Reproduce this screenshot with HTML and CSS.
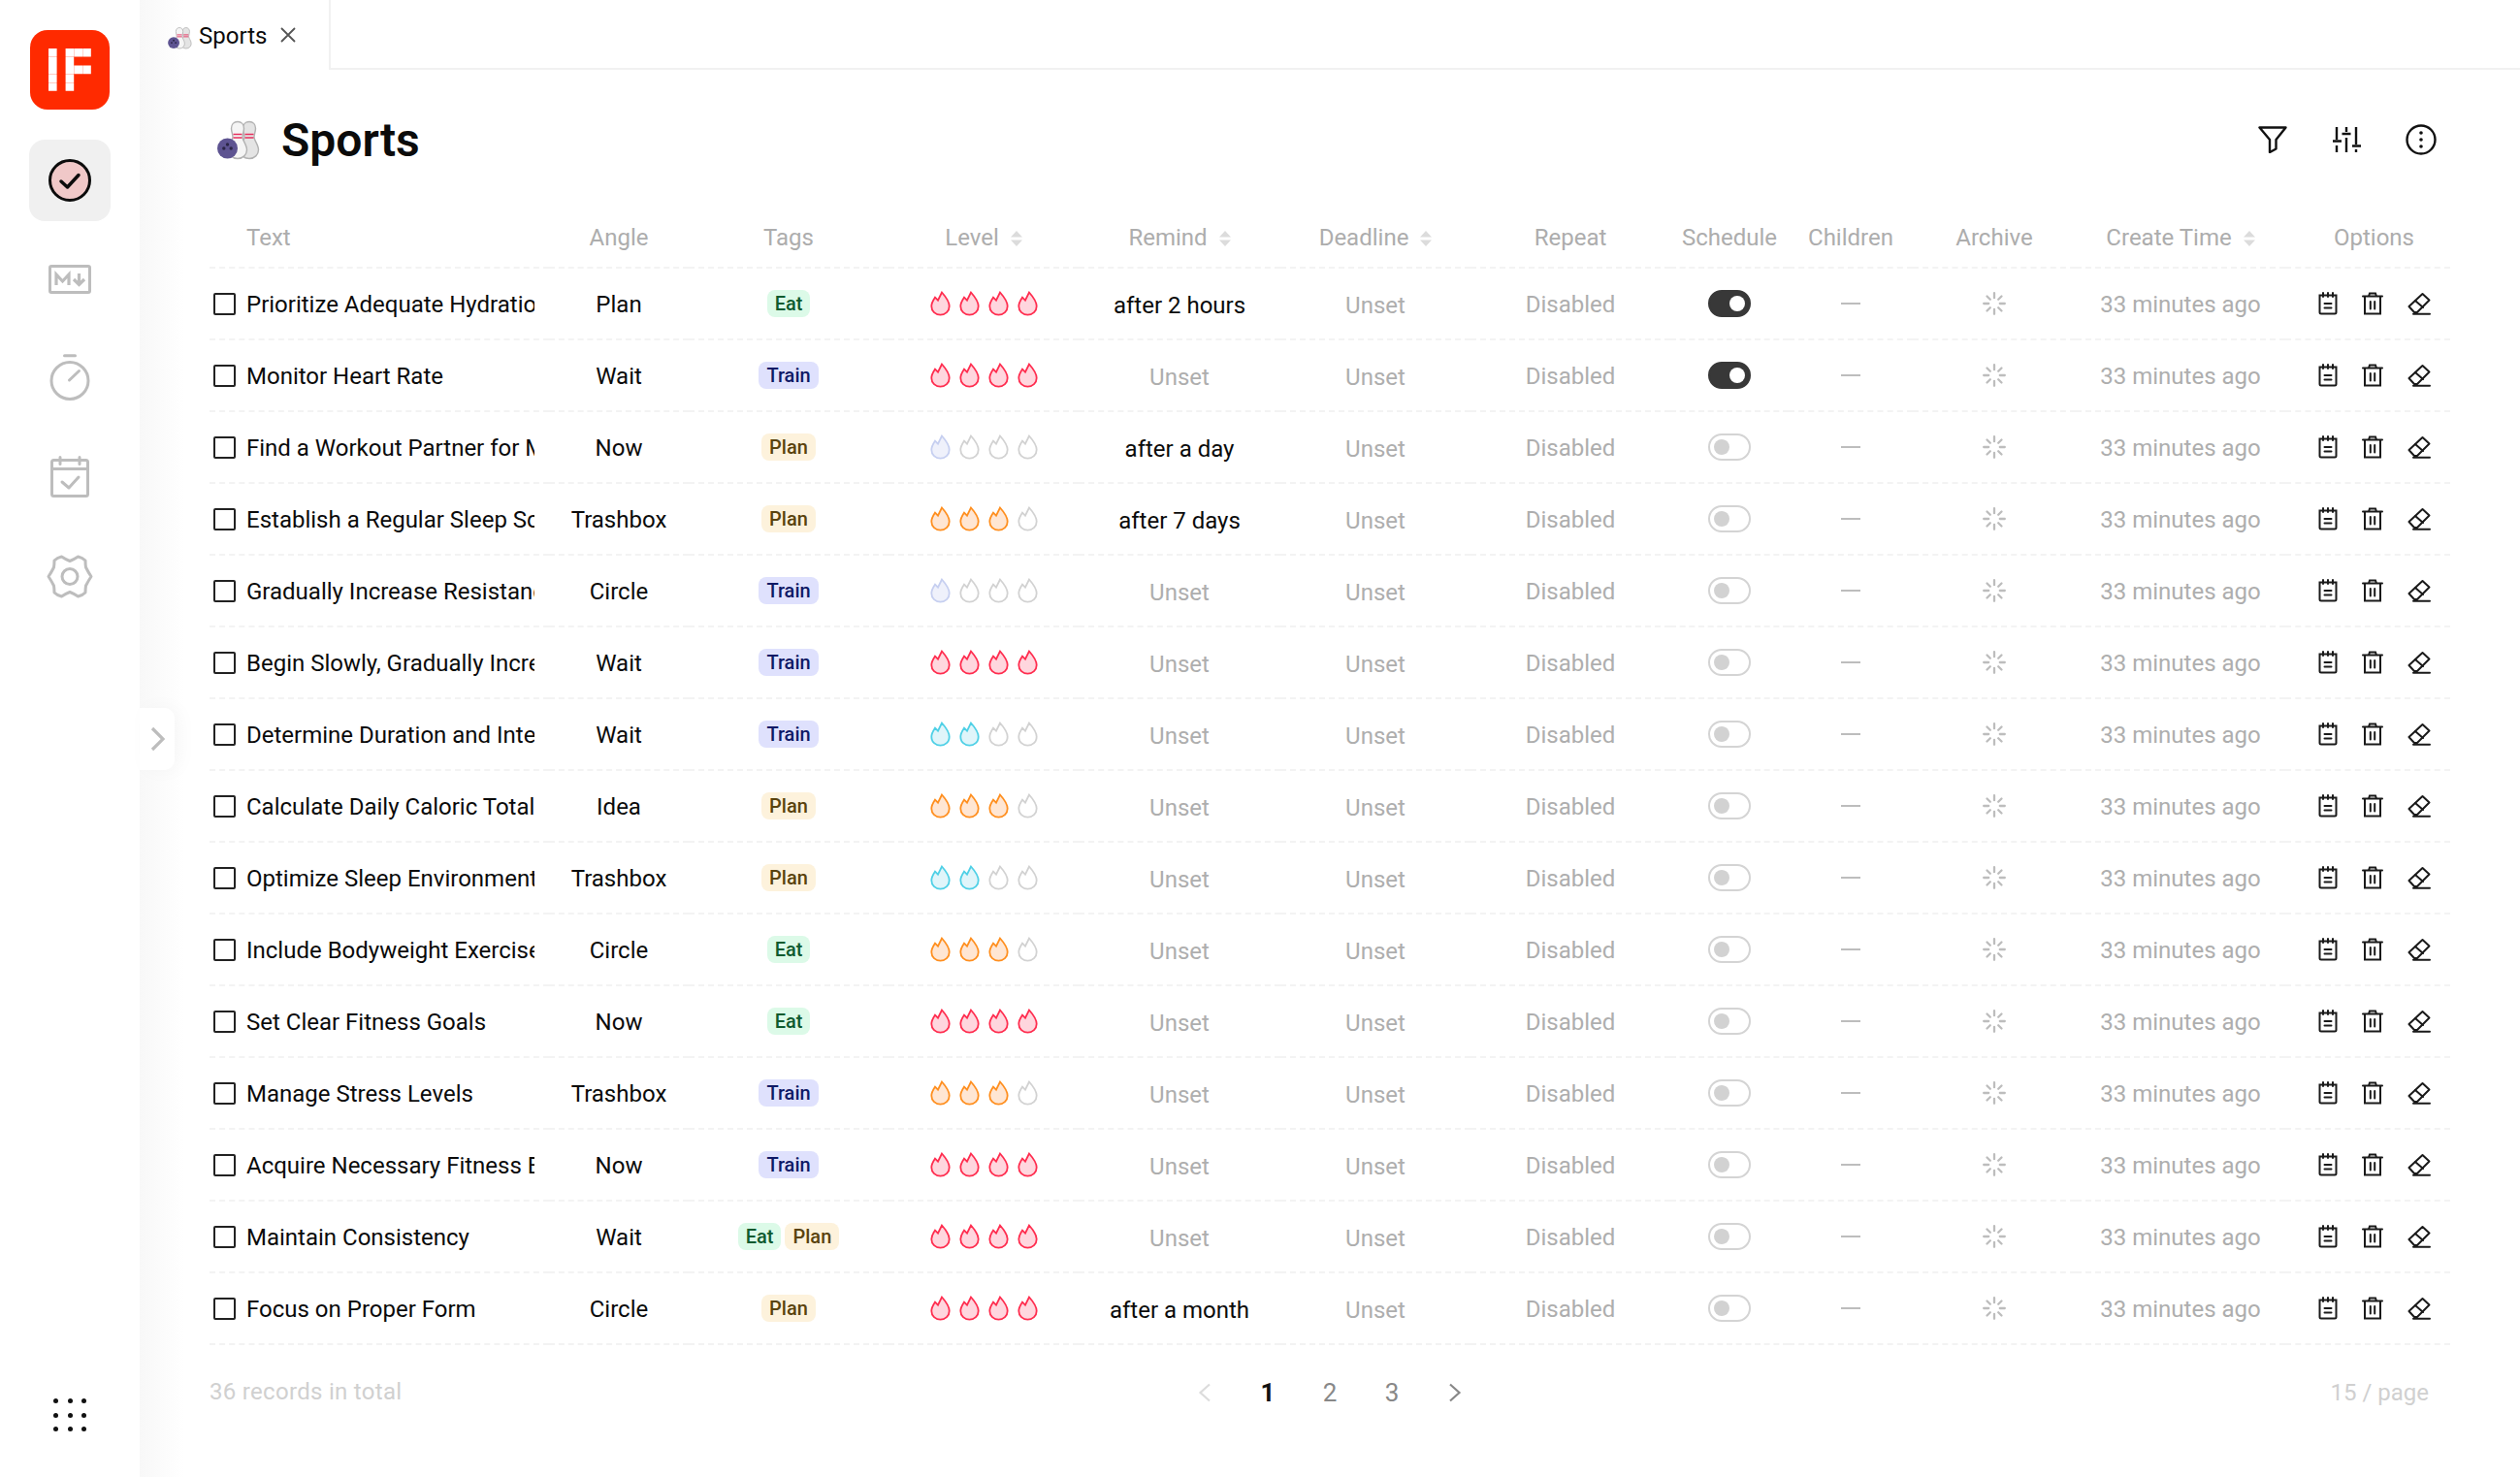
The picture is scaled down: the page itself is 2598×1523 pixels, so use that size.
FILE: index.html
```html
<!DOCTYPE html>
<html lang="en">
<head>
<meta charset="utf-8">
<title>Sports</title>
<link rel="stylesheet" href="styles.css">
</head>
<body>
<svg class="defs" width="0" height="0" aria-hidden="true">
  <symbol id="flame" viewBox="0 0 21 26"><path d="M12 1.500C16 6 19.700 10.600 19.700 15.800C19.700 21 15.600 24.600 10.500 24.600C5.400 24.600 1.300 21 1.300 15.800C1.300 12 3.200 9.300 5 6.600L8 9.700Z"/></symbol>
  <symbol id="pins" viewBox="0 0 46 42">
    <path d="M35 2.500c-4 0-6.500 3-6.500 7 0 3 1.500 6 1.500 9 0 3-4.500 8-4.500 13 0 5 4 9 9.500 9s9.500-4 9.500-9c0-5-4.500-10-4.500-13 0-3 1.500-6 1.500-9 0-4-2.500-7-6.500-7z" fill="#e4e4e4" stroke="#b2b2b2" stroke-width="1.400"/>
    <path d="M23 2.500c-4 0-6.500 3-6.500 7 0 3 1.500 6 1.500 9 0 3-4.500 8-4.500 13 0 5 4 9 9.500 9s9.500-4 9.500-9c0-5-4.500-10-4.500-13 0-3 1.500-6 1.500-9 0-4-2.500-7-6.500-7z" fill="#f5f5f5" stroke="#b2b2b2" stroke-width="1.400"/>
    <path d="M18.500 15.500h9M18.500 19h9M30.500 15.500h9M30.500 19h9" stroke="#e6305e" stroke-width="1.600"/>
    <circle cx="12.500" cy="30" r="10.500" fill="#5d5391"/>
    <circle cx="12.500" cy="26" r="1.700" fill="#2b2546"/><circle cx="8.800" cy="30" r="1.700" fill="#2b2546"/><circle cx="16.200" cy="30" r="1.700" fill="#2b2546"/>
  </symbol>
  <symbol id="note" viewBox="0 0 20 24"><g fill="none" stroke="currentColor" stroke-width="2" stroke-linecap="round"><path d="M1.500 3.500h17v17.500a1.500 1.500 0 0 1-1.500 1.500h-14a1.500 1.500 0 0 1-1.500-1.500z"/><path d="M5 1v4M10 1v4M15 1v4M6.500 12h7M6.500 16.500h7"/></g></symbol>
  <symbol id="trash" viewBox="0 0 22 24"><g fill="none" stroke="currentColor" stroke-width="2" stroke-linecap="round"><path d="M1 4.500h20M3 4.500v18h16v-18M7 4.500l1-3h6l1 3M8.800 10v7.500M13.200 10v7.500"/></g></symbol>
  <symbol id="eraser" viewBox="0 0 24 24"><g fill="none" stroke="currentColor" stroke-width="2" stroke-linejoin="round" stroke-linecap="round"><path d="M1.500 15L15.500 2l7 6.500-12.500 12.500H7z"/><path d="M8 9l8 7M6 22.800h17"/></g></symbol>
  <symbol id="burst" viewBox="0 0 24 24"><g stroke="currentColor" stroke-width="2.300" stroke-linecap="round"><path d="M12 1.200v5M12 17.800v5M1.200 12h5M17.800 12h5M4.500 4.500l3.300 3.300M16.200 16.200l3.300 3.300M4.500 19.500l3.300-3.300M16.200 7.800l3.300-3.300"/></g></symbol>
  <symbol id="sorter" viewBox="0 0 12 16"><path d="M6 0l6 6.500H0zM6 16l6-6.500H0z"/></symbol>
  <symbol id="chev-right" viewBox="0 0 14 20"><path d="M2 1.500l9.500 8.500L2 18.500" fill="none" stroke="currentColor" stroke-width="2.200"/></symbol>
</svg>

<div class="app">
  <nav class="rail">
    <div class="logo" aria-label="IF logo">
      <svg width="44" height="44" viewBox="0 0 44 44"><g fill="#fff"><path d="M0 0h8.600v8.600H0zM0 8.800h8.600v8.600H0zM0 17.600h8.600v8.600H0zM0 26.400h8.600v8.600H0zM0 35.200h8.600v8.600H0z"/><path d="M17.600 0h8.600v8.600h-8.600zM26.400 0h8.600v8.600h-8.600zM35.200 0h8.600v8.600h-8.600zM17.600 8.800h8.600v8.600h-8.600zM17.600 17.600h8.600v8.600h-8.600zM26.400 17.600h8.600v8.600h-8.600zM35.200 17.600h8.600v8.600h-8.600zM17.600 26.400h8.600v8.600h-8.600zM17.600 35.200h8.600v8.600h-8.600z"/></g></svg>
    </div>
    <div class="rail-item active">
      <svg width="44" height="44" viewBox="0 0 44 44"><circle cx="22" cy="22" r="20.500" fill="#f0c8c8" stroke="#0c0c0c" stroke-width="3"/><path d="M13 23l6.500 6L31 16.500" fill="none" stroke="#0c0c0c" stroke-width="3.500" stroke-linecap="round" stroke-linejoin="round"/></svg>
    </div>
    <div class="rail-item">
      <svg width="44" height="30" viewBox="0 0 44 30"><rect x="1.500" y="1.500" width="41" height="27" rx="1.500" fill="none" stroke="#bdbdbd" stroke-width="3"/><path d="M8 21V10l6.500 7L21 10v11M31.500 9v11M26 15l5.500 5.500L37 15" fill="none" stroke="#bdbdbd" stroke-width="3.200"/></svg>
    </div>
    <div class="rail-item">
      <svg class="timer" width="44" height="48" viewBox="0 0 44 48"><g fill="none" stroke="#bdbdbd" stroke-width="3" stroke-linecap="round"><circle cx="22" cy="27.500" r="19"/><path d="M16.500 1.700h11M21.500 27l10-9.500"/></g></svg>
    </div>
    <div class="rail-item">
      <svg width="44" height="44" viewBox="0 0 44 44"><g fill="none" stroke="#bdbdbd" stroke-width="3" stroke-linecap="round" stroke-linejoin="round"><rect x="3.500" y="4.500" width="37" height="37" rx="2"/><path d="M3.500 13.500h37M12 1.500v7M32 1.500v7M14 27l7 6 10-11"/></g></svg>
    </div>
    <div class="rail-item">
      <svg width="48" height="45" viewBox="0 0 48 45"><g fill="none" stroke="#bdbdbd" stroke-width="3" stroke-linejoin="round"><path d="M24 6.500Q20 5 15.500 2Q11 3 8 6Q8 10 7.500 13Q5 18 2 22.500Q5 27 7.500 32Q8 35 8 39Q11 42 15.500 43Q20 40 24 38.500Q28 40 32.500 43Q37 42 40 39Q40 35 40.500 32Q43 27 46 22.500Q43 18 40.500 13Q40 10 40 6Q37 3 32.500 2Q28 5 24 6.500Z"/><circle cx="24" cy="22.500" r="8"/></g></svg>
    </div>
    <div class="rail-spacer"></div>
    <div class="grid-dots" aria-hidden="true">
      <i></i><i></i><i></i><i></i><i></i><i></i><i></i><i></i><i></i>
    </div>
  </nav>

  <main class="main">
    <button class="collapse" aria-label="Expand">
      <svg width="15" height="26" viewBox="0 0 15 26"><path d="M2 2l11 11L2 24" fill="none" stroke="#bdbdbd" stroke-width="3.200"/></svg>
    </button>
    <header class="tabbar">
      <div class="tab">
        <svg class="tab-ico"><use href="#pins"/></svg>
        <span class="tab-label">Sports</span>
        <svg class="tab-x" width="18" height="18" viewBox="0 0 18 18"><path d="M2 2l14 14M16 2L2 16" stroke="#555" stroke-width="1.800"/></svg>
      </div>
      <div class="tab-rest"></div>
    </header>

    <section class="content">
      <div class="title-row">
        <svg class="title-ico"><use href="#pins"/></svg>
        <h1>Sports</h1>
        <div class="tools">
          <svg width="30" height="28" viewBox="0 0 30 28"><path d="M1.500 1.500h27L18.500 14v9.500l-6.500 3.500V14z" fill="none" stroke="#111" stroke-width="2.400" stroke-linejoin="round"/></svg>
          <svg width="30" height="28" viewBox="0 0 30 28"><path d="M5 1v13M5 20v7M15 1v5M15 12v15M25 1v18M25 24v3M1 15.500h9M10.500 8h9M21 20.500h9" fill="none" stroke="#111" stroke-width="2.400"/></svg>
          <svg width="32" height="32" viewBox="0 0 32 32"><circle cx="16" cy="16" r="14.500" fill="none" stroke="#111" stroke-width="2.400"/><circle cx="16" cy="9" r="1.800" fill="#111"/><circle cx="16" cy="16" r="1.800" fill="#111"/><circle cx="16" cy="23" r="1.800" fill="#111"/></svg>
        </div>
      </div>

      <table class="grid">
        <colgroup>
          <col class="c-text"><col class="c-angle"><col class="c-tags"><col class="c-level"><col class="c-remind"><col class="c-deadline"><col class="c-repeat"><col class="c-schedule"><col class="c-children"><col class="c-archive"><col class="c-time"><col class="c-options">
        </colgroup>
        <thead>
          <tr>
            <th class="th-text">Text</th><th>Angle</th><th>Tags</th>
            <th>Level<svg class="sort"><use href="#sorter"/></svg></th>
            <th>Remind<svg class="sort"><use href="#sorter"/></svg></th>
            <th>Deadline<svg class="sort"><use href="#sorter"/></svg></th>
            <th>Repeat</th><th>Schedule</th><th>Children</th><th>Archive</th>
            <th>Create Time<svg class="sort"><use href="#sorter"/></svg></th>
            <th class="td-opts">Options</th>
          </tr>
        </thead>
        <tbody>
          <tr><td><div class="text-cell"><span class="check"></span><span class="clip">Prioritize Adequate Hydration</span></div></td><td class="angle">Plan</td><td><div class="tags"><span class="tag eat">Eat</span></div></td><td><div class="flames"><svg class="flame red"><use href="#flame"/></svg><svg class="flame red"><use href="#flame"/></svg><svg class="flame red"><use href="#flame"/></svg><svg class="flame red"><use href="#flame"/></svg></div></td><td class="low">after 2 hours</td><td class="muted low">Unset</td><td class="muted">Disabled</td><td><span class="switch on"><i></i></span></td><td><span class="dash"></span></td><td><svg class="burst"><use href="#burst"/></svg></td><td class="muted">33 minutes ago</td><td class="td-opts"><div class="opts"><svg class="op-note"><use href="#note"/></svg><svg class="op-trash"><use href="#trash"/></svg><svg class="op-eraser"><use href="#eraser"/></svg></div></td></tr>
          <tr><td><div class="text-cell"><span class="check"></span><span class="clip">Monitor Heart Rate</span></div></td><td class="angle">Wait</td><td><div class="tags"><span class="tag train">Train</span></div></td><td><div class="flames"><svg class="flame red"><use href="#flame"/></svg><svg class="flame red"><use href="#flame"/></svg><svg class="flame red"><use href="#flame"/></svg><svg class="flame red"><use href="#flame"/></svg></div></td><td class="muted low">Unset</td><td class="muted low">Unset</td><td class="muted">Disabled</td><td><span class="switch on"><i></i></span></td><td><span class="dash"></span></td><td><svg class="burst"><use href="#burst"/></svg></td><td class="muted">33 minutes ago</td><td class="td-opts"><div class="opts"><svg class="op-note"><use href="#note"/></svg><svg class="op-trash"><use href="#trash"/></svg><svg class="op-eraser"><use href="#eraser"/></svg></div></td></tr>
          <tr><td><div class="text-cell"><span class="check"></span><span class="clip">Find a Workout Partner for Motivation</span></div></td><td class="angle">Now</td><td><div class="tags"><span class="tag plan">Plan</span></div></td><td><div class="flames"><svg class="flame lav"><use href="#flame"/></svg><svg class="flame off"><use href="#flame"/></svg><svg class="flame off"><use href="#flame"/></svg><svg class="flame off"><use href="#flame"/></svg></div></td><td class="low">after a day</td><td class="muted low">Unset</td><td class="muted">Disabled</td><td><span class="switch"><i></i></span></td><td><span class="dash"></span></td><td><svg class="burst"><use href="#burst"/></svg></td><td class="muted">33 minutes ago</td><td class="td-opts"><div class="opts"><svg class="op-note"><use href="#note"/></svg><svg class="op-trash"><use href="#trash"/></svg><svg class="op-eraser"><use href="#eraser"/></svg></div></td></tr>
          <tr><td><div class="text-cell"><span class="check"></span><span class="clip">Establish a Regular Sleep Schedule</span></div></td><td class="angle">Trashbox</td><td><div class="tags"><span class="tag plan">Plan</span></div></td><td><div class="flames"><svg class="flame ora"><use href="#flame"/></svg><svg class="flame ora"><use href="#flame"/></svg><svg class="flame ora"><use href="#flame"/></svg><svg class="flame off"><use href="#flame"/></svg></div></td><td class="low">after 7 days</td><td class="muted low">Unset</td><td class="muted">Disabled</td><td><span class="switch"><i></i></span></td><td><span class="dash"></span></td><td><svg class="burst"><use href="#burst"/></svg></td><td class="muted">33 minutes ago</td><td class="td-opts"><div class="opts"><svg class="op-note"><use href="#note"/></svg><svg class="op-trash"><use href="#trash"/></svg><svg class="op-eraser"><use href="#eraser"/></svg></div></td></tr>
          <tr><td><div class="text-cell"><span class="check"></span><span class="clip">Gradually Increase Resistance</span></div></td><td class="angle">Circle</td><td><div class="tags"><span class="tag train">Train</span></div></td><td><div class="flames"><svg class="flame lav"><use href="#flame"/></svg><svg class="flame off"><use href="#flame"/></svg><svg class="flame off"><use href="#flame"/></svg><svg class="flame off"><use href="#flame"/></svg></div></td><td class="muted low">Unset</td><td class="muted low">Unset</td><td class="muted">Disabled</td><td><span class="switch"><i></i></span></td><td><span class="dash"></span></td><td><svg class="burst"><use href="#burst"/></svg></td><td class="muted">33 minutes ago</td><td class="td-opts"><div class="opts"><svg class="op-note"><use href="#note"/></svg><svg class="op-trash"><use href="#trash"/></svg><svg class="op-eraser"><use href="#eraser"/></svg></div></td></tr>
          <tr><td><div class="text-cell"><span class="check"></span><span class="clip">Begin Slowly, Gradually Increase</span></div></td><td class="angle">Wait</td><td><div class="tags"><span class="tag train">Train</span></div></td><td><div class="flames"><svg class="flame red"><use href="#flame"/></svg><svg class="flame red"><use href="#flame"/></svg><svg class="flame red"><use href="#flame"/></svg><svg class="flame red"><use href="#flame"/></svg></div></td><td class="muted low">Unset</td><td class="muted low">Unset</td><td class="muted">Disabled</td><td><span class="switch"><i></i></span></td><td><span class="dash"></span></td><td><svg class="burst"><use href="#burst"/></svg></td><td class="muted">33 minutes ago</td><td class="td-opts"><div class="opts"><svg class="op-note"><use href="#note"/></svg><svg class="op-trash"><use href="#trash"/></svg><svg class="op-eraser"><use href="#eraser"/></svg></div></td></tr>
          <tr><td><div class="text-cell"><span class="check"></span><span class="clip">Determine Duration and Intensity</span></div></td><td class="angle">Wait</td><td><div class="tags"><span class="tag train">Train</span></div></td><td><div class="flames"><svg class="flame blu"><use href="#flame"/></svg><svg class="flame blu"><use href="#flame"/></svg><svg class="flame off"><use href="#flame"/></svg><svg class="flame off"><use href="#flame"/></svg></div></td><td class="muted low">Unset</td><td class="muted low">Unset</td><td class="muted">Disabled</td><td><span class="switch"><i></i></span></td><td><span class="dash"></span></td><td><svg class="burst"><use href="#burst"/></svg></td><td class="muted">33 minutes ago</td><td class="td-opts"><div class="opts"><svg class="op-note"><use href="#note"/></svg><svg class="op-trash"><use href="#trash"/></svg><svg class="op-eraser"><use href="#eraser"/></svg></div></td></tr>
          <tr><td><div class="text-cell"><span class="check"></span><span class="clip">Calculate Daily Caloric Total Intake</span></div></td><td class="angle">Idea</td><td><div class="tags"><span class="tag plan">Plan</span></div></td><td><div class="flames"><svg class="flame ora"><use href="#flame"/></svg><svg class="flame ora"><use href="#flame"/></svg><svg class="flame ora"><use href="#flame"/></svg><svg class="flame off"><use href="#flame"/></svg></div></td><td class="muted low">Unset</td><td class="muted low">Unset</td><td class="muted">Disabled</td><td><span class="switch"><i></i></span></td><td><span class="dash"></span></td><td><svg class="burst"><use href="#burst"/></svg></td><td class="muted">33 minutes ago</td><td class="td-opts"><div class="opts"><svg class="op-note"><use href="#note"/></svg><svg class="op-trash"><use href="#trash"/></svg><svg class="op-eraser"><use href="#eraser"/></svg></div></td></tr>
          <tr><td><div class="text-cell"><span class="check"></span><span class="clip">Optimize Sleep Environment</span></div></td><td class="angle">Trashbox</td><td><div class="tags"><span class="tag plan">Plan</span></div></td><td><div class="flames"><svg class="flame blu"><use href="#flame"/></svg><svg class="flame blu"><use href="#flame"/></svg><svg class="flame off"><use href="#flame"/></svg><svg class="flame off"><use href="#flame"/></svg></div></td><td class="muted low">Unset</td><td class="muted low">Unset</td><td class="muted">Disabled</td><td><span class="switch"><i></i></span></td><td><span class="dash"></span></td><td><svg class="burst"><use href="#burst"/></svg></td><td class="muted">33 minutes ago</td><td class="td-opts"><div class="opts"><svg class="op-note"><use href="#note"/></svg><svg class="op-trash"><use href="#trash"/></svg><svg class="op-eraser"><use href="#eraser"/></svg></div></td></tr>
          <tr><td><div class="text-cell"><span class="check"></span><span class="clip">Include Bodyweight Exercises</span></div></td><td class="angle">Circle</td><td><div class="tags"><span class="tag eat">Eat</span></div></td><td><div class="flames"><svg class="flame ora"><use href="#flame"/></svg><svg class="flame ora"><use href="#flame"/></svg><svg class="flame ora"><use href="#flame"/></svg><svg class="flame off"><use href="#flame"/></svg></div></td><td class="muted low">Unset</td><td class="muted low">Unset</td><td class="muted">Disabled</td><td><span class="switch"><i></i></span></td><td><span class="dash"></span></td><td><svg class="burst"><use href="#burst"/></svg></td><td class="muted">33 minutes ago</td><td class="td-opts"><div class="opts"><svg class="op-note"><use href="#note"/></svg><svg class="op-trash"><use href="#trash"/></svg><svg class="op-eraser"><use href="#eraser"/></svg></div></td></tr>
          <tr><td><div class="text-cell"><span class="check"></span><span class="clip">Set Clear Fitness Goals</span></div></td><td class="angle">Now</td><td><div class="tags"><span class="tag eat">Eat</span></div></td><td><div class="flames"><svg class="flame red"><use href="#flame"/></svg><svg class="flame red"><use href="#flame"/></svg><svg class="flame red"><use href="#flame"/></svg><svg class="flame red"><use href="#flame"/></svg></div></td><td class="muted low">Unset</td><td class="muted low">Unset</td><td class="muted">Disabled</td><td><span class="switch"><i></i></span></td><td><span class="dash"></span></td><td><svg class="burst"><use href="#burst"/></svg></td><td class="muted">33 minutes ago</td><td class="td-opts"><div class="opts"><svg class="op-note"><use href="#note"/></svg><svg class="op-trash"><use href="#trash"/></svg><svg class="op-eraser"><use href="#eraser"/></svg></div></td></tr>
          <tr><td><div class="text-cell"><span class="check"></span><span class="clip">Manage Stress Levels</span></div></td><td class="angle">Trashbox</td><td><div class="tags"><span class="tag train">Train</span></div></td><td><div class="flames"><svg class="flame ora"><use href="#flame"/></svg><svg class="flame ora"><use href="#flame"/></svg><svg class="flame ora"><use href="#flame"/></svg><svg class="flame off"><use href="#flame"/></svg></div></td><td class="muted low">Unset</td><td class="muted low">Unset</td><td class="muted">Disabled</td><td><span class="switch"><i></i></span></td><td><span class="dash"></span></td><td><svg class="burst"><use href="#burst"/></svg></td><td class="muted">33 minutes ago</td><td class="td-opts"><div class="opts"><svg class="op-note"><use href="#note"/></svg><svg class="op-trash"><use href="#trash"/></svg><svg class="op-eraser"><use href="#eraser"/></svg></div></td></tr>
          <tr><td><div class="text-cell"><span class="check"></span><span class="clip">Acquire Necessary Fitness Equipment</span></div></td><td class="angle">Now</td><td><div class="tags"><span class="tag train">Train</span></div></td><td><div class="flames"><svg class="flame red"><use href="#flame"/></svg><svg class="flame red"><use href="#flame"/></svg><svg class="flame red"><use href="#flame"/></svg><svg class="flame red"><use href="#flame"/></svg></div></td><td class="muted low">Unset</td><td class="muted low">Unset</td><td class="muted">Disabled</td><td><span class="switch"><i></i></span></td><td><span class="dash"></span></td><td><svg class="burst"><use href="#burst"/></svg></td><td class="muted">33 minutes ago</td><td class="td-opts"><div class="opts"><svg class="op-note"><use href="#note"/></svg><svg class="op-trash"><use href="#trash"/></svg><svg class="op-eraser"><use href="#eraser"/></svg></div></td></tr>
          <tr><td><div class="text-cell"><span class="check"></span><span class="clip">Maintain Consistency</span></div></td><td class="angle">Wait</td><td><div class="tags"><span class="tag eat">Eat</span><span class="tag plan">Plan</span></div></td><td><div class="flames"><svg class="flame red"><use href="#flame"/></svg><svg class="flame red"><use href="#flame"/></svg><svg class="flame red"><use href="#flame"/></svg><svg class="flame red"><use href="#flame"/></svg></div></td><td class="muted low">Unset</td><td class="muted low">Unset</td><td class="muted">Disabled</td><td><span class="switch"><i></i></span></td><td><span class="dash"></span></td><td><svg class="burst"><use href="#burst"/></svg></td><td class="muted">33 minutes ago</td><td class="td-opts"><div class="opts"><svg class="op-note"><use href="#note"/></svg><svg class="op-trash"><use href="#trash"/></svg><svg class="op-eraser"><use href="#eraser"/></svg></div></td></tr>
          <tr><td><div class="text-cell"><span class="check"></span><span class="clip">Focus on Proper Form</span></div></td><td class="angle">Circle</td><td><div class="tags"><span class="tag plan">Plan</span></div></td><td><div class="flames"><svg class="flame red"><use href="#flame"/></svg><svg class="flame red"><use href="#flame"/></svg><svg class="flame red"><use href="#flame"/></svg><svg class="flame red"><use href="#flame"/></svg></div></td><td class="low">after a month</td><td class="muted low">Unset</td><td class="muted">Disabled</td><td><span class="switch"><i></i></span></td><td><span class="dash"></span></td><td><svg class="burst"><use href="#burst"/></svg></td><td class="muted">33 minutes ago</td><td class="td-opts"><div class="opts"><svg class="op-note"><use href="#note"/></svg><svg class="op-trash"><use href="#trash"/></svg><svg class="op-eraser"><use href="#eraser"/></svg></div></td></tr>
        </tbody>
      </table>

      <footer class="foot">
        <div class="total">36 records in total</div>
        <div class="pager">
          <svg class="pg-prev" width="14" height="20"><use href="#chev-right"/></svg>
          <span class="pg current">1</span><span class="pg">2</span><span class="pg">3</span>
          <svg class="pg-next" width="14" height="20"><use href="#chev-right"/></svg>
        </div>
        <div class="perpage">15 / page</div>
      </footer>
    </section>
  </main>
</div>
</body>
</html>
```

FILE: styles.css
```css
* { box-sizing: border-box; }
html, body { margin: 0; height: 100%; }
body {
  font-family: Roboto, "Liberation Sans", sans-serif;
  font-size: 24px;
  color: #0b0b0b;
  background: #fff;
  overflow: hidden;
}
.defs { position: absolute; }
.app { display: flex; height: 1523px; }

.rail {
  width: 144px;
  flex: none;
  display: flex;
  flex-direction: column;
  align-items: center;
  padding-top: 31px;
  padding-bottom: 47px;
  background: #fff;
}
.logo {
  width: 82px; height: 82px;
  border-radius: 18px;
  background: #ff2a00;
  display: flex; align-items: center; justify-content: center;
  margin-bottom: 31px;
}
.rail-item {
  width: 84px; height: 84px;
  border-radius: 16px;
  display: flex; align-items: center; justify-content: center;
  margin-bottom: 18px;
}
.rail-item.active { background: #f0f0f0; }
.timer { margin-bottom: 3px; }
.rail-spacer { flex: 1; }
.grid-dots {
  display: grid;
  grid-template-columns: repeat(3, 5px);
  gap: 9.500px;
}
.grid-dots i { width: 5px; height: 5px; border-radius: 50%; background: #111; }

.main {
  position: relative;
  flex: 1;
  min-width: 0;
  background: linear-gradient(90deg, #f8f8f8 0, #fff 46px);
}
.collapse {
  position: absolute;
  left: 0; top: 730px;
  width: 36px; height: 64px;
  padding: 0 0 0 11px;
  border: 0;
  border-radius: 0 10px 10px 0;
  background: #fff;
  box-shadow: 6px 0 20px rgba(0,0,0,.03);
  display: flex; align-items: center;
}

.tabbar { display: flex; height: 72px; }
.tab {
  width: 197px;
  display: flex; align-items: center;
  padding: 0 0 0 28px;
  font-size: 24px;
  border-right: 2px solid #f1f1f1;
}
.tab-ico { width: 26px; height: 24px; margin-right: 7px; margin-top: 5px; }
.tab-label { padding-top: 2px; }
.tab-x { margin-left: 13px; }
.tab-rest { flex: 1; border-bottom: 2px solid #f1f1f1; }

.content { padding: 0 72px; }
.title-row { display: flex; align-items: center; height: 104px; margin-top: 20px; }
.title-ico { width: 46px; height: 42px; margin-left: 6px; margin-right: 22px; }
h1 { margin: 0; padding-top: 2px; font-size: 48px; font-weight: 600; line-height: 1; }
.tools { margin-left: auto; display: flex; align-items: center; gap: 46px; margin-right: 14px; }

.grid { width: 2310px; border-collapse: collapse; table-layout: fixed; margin-top: 12px; }
.c-text { width: 350px; } .c-angle { width: 144px; } .c-tags { width: 206px; }
.c-level { width: 196px; } .c-remind { width: 208px; } .c-deadline { width: 196px; }
.c-repeat { width: 206px; } .c-schedule { width: 122px; } .c-children { width: 128px; }
.c-archive { width: 168px; } .c-time { width: 216px; } .c-options { width: 170px; }

th {
  height: 68px;
  font-weight: 400;
  font-size: 24px;
  color: #adadad;
  text-align: center;
  border-bottom: 2px dashed #f3f3f3;
  padding: 7px 0 0;
  white-space: nowrap;
}
.th-text { text-align: left; padding-left: 38px; }
.sort { width: 12px; height: 16px; margin-left: 12px; fill: #dcdcdc; vertical-align: -1px; }
td {
  height: 74px;
  padding: 0;
  text-align: center;
  border-bottom: 2px dashed #f3f3f3;
  white-space: nowrap;
}
th.td-opts, td.td-opts { padding-left: 13px; }
.angle, .muted { padding-top: 2px; }
.muted { color: #aeaeae; }
.low { padding-top: 4px; }
.text-cell { display: flex; align-items: center; padding-left: 4px; }
.check { width: 23px; height: 23px; border: 2px solid #222; border-radius: 2px; flex: none; margin-right: 11px; }
.clip { width: 297px; overflow: hidden; text-align: left; padding-top: 2px; }

.tags { display: flex; justify-content: center; gap: 4px; }
.tag { height: 28px; line-height: 28px; padding: 0 8px; border-radius: 8px; font-size: 20px; font-weight: 500; }
.tag.eat { background: #dcfae8; color: #0f5a2f; }
.tag.plan { background: #fdf2dc; color: #5a430e; }
.tag.train { background: #dfe1fd; color: #0f1a66; }

.flames { display: flex; justify-content: center; gap: 9px; }
.flame { width: 21px; height: 26px; stroke-width: 1.800; }
.flame.red { fill: #ffd6de; stroke: #ff2d4f; }
.flame.ora { fill: #ffe6d3; stroke: #ff8f1f; }
.flame.blu { fill: #e0f5fa; stroke: #4fd0e6; }
.flame.lav { fill: #eff1fb; stroke: #c6cff0; }
.flame.off { fill: #fff; stroke: #d2d2d2; }

.switch {
  display: flex; align-items: center;
  margin: 0 auto;
  width: 44px; height: 28px;
  border-radius: 14px;
  border: 2px solid #d4d4d4;
  padding-left: 4px;
  background: #fff;
}
.switch i { width: 16px; height: 16px; border-radius: 50%; background: #d2d2d2; }
.switch.on { background: #383838; border-color: #383838; padding-left: 20px; }
.switch.on i { background: #fff; }
.dash { display: block; margin: 0 auto; width: 20px; height: 2px; background: #bdbdbd; }
.burst { display: block; margin: 0 auto; width: 24px; height: 24px; color: #bdbdbd; }
.opts { display: flex; justify-content: center; align-items: center; gap: 25px; color: #1a1a1a; }
.op-note { width: 20px; height: 24px; }
.op-trash { width: 22px; height: 24px; }
.op-eraser { width: 24px; height: 24px; }

.foot { display: flex; align-items: center; height: 96px; }
.total { color: #d0d0d0; width: 993px; letter-spacing: .3px; }
.pager { display: flex; align-items: center; padding-top: 2px; }
.pg { width: 64px; text-align: center; color: #888; font-size: 26px; }
.pg.current { color: #111; font-weight: 700; }
.pg-prev { margin: 0 26px; color: #dcdcdc; transform: scaleX(-1); }
.pg-next { margin: 0 26px; color: #888; }
.perpage { margin-left: auto; margin-right: 22px; padding-top: 2px; color: #d0d0d0; }
```
